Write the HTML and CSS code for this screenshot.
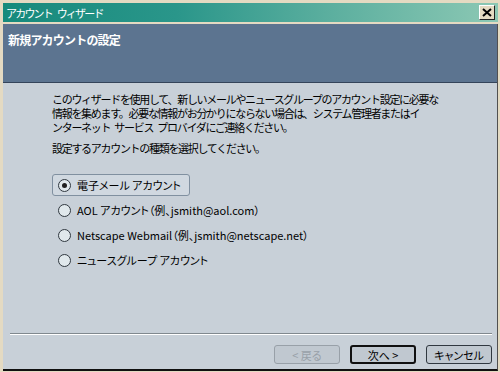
FILE: index.html
```html
<!DOCTYPE html>
<html lang="ja">
<head>
    <meta charset="UTF-8">
    <title>アカウント ウィザード</title>
    <link rel="stylesheet" href="styles.css">
</head>
<body>
    <div class="window">
        <div class="titlebar">
            <span class="title">アカウント ウィザード</span>
            <span class="close-btn">
                <svg width="10" height="9" viewBox="0 0 10 9">
                    <path d="M1 1 L9 8 M9 1 L1 8" stroke="#000" stroke-width="2"/>
                </svg>
            </span>
        </div>
        <div class="frame">
            <div class="header">
                <h1>新規アカウントの設定</h1>
            </div>
            <div class="content">
                <p class="intro">このウィザードを使用して、新しいメールやニュースグループのアカウント設定に必要な<br>情報を集めます。必要な情報がお分かりにならない場合は、システム管理者またはイ<br>ンターネット サービス プロバイダにご連絡ください。</p>
                <p class="prompt">設定するアカウントの種類を選択してください。</p>

                <div class="options">
                    <label class="option focused"><span class="radio checked"></span>電子メール アカウント</label>
                    <label class="option"><span class="radio"></span>AOL アカウント（例、jsmith@aol.com）</label>
                    <label class="option"><span class="radio"></span>Netscape Webmail（例、jsmith@netscape.net）</label>
                    <label class="option"><span class="radio"></span>ニュースグループ アカウント</label>
                </div>
            </div>
            <div class="footer">
                <div class="separator"></div>
                <div class="buttons">
                    <button class="btn" disabled>&lt; 戻る</button>
                    <button class="btn default">次へ &gt;</button>
                    <button class="btn">キャンセル</button>
                </div>
            </div>
        </div>
    </div>
</body>
</html>
```

FILE: styles.css
```css
/* Окно мастера */
body {
    margin: 0;
    font-family: "Noto Sans CJK JP", "DejaVu Sans", sans-serif;
    font-size: 11px;
    font-feature-settings: "palt";
}

.window {
    width: 500px;
    height: 372px;
    box-sizing: border-box;
    background: #e4dac2;
    padding: 3px 2px 1px 3px;
    display: flex;
    flex-direction: column;
}

/* Заголовок окна */
.titlebar {
    height: 19px;
    display: flex;
    align-items: center;
    justify-content: space-between;
    padding: 0 3px 0 3px;
    background: linear-gradient(to right, #168a7c 0%, #2a968a 35%, #5aae9e 65%, #8cc8b4 100%);
    color: white;
    margin-bottom: 2px;
}

.title {
    font-size: 11px;
    font-feature-settings: normal;
    letter-spacing: -1.8px;
    word-spacing: 4px;
}

.close-btn {
    width: 14px;
    height: 13px;
    display: flex;
    align-items: center;
    justify-content: center;
    background: #e4dac2;
    border-top: 1px solid #fff;
    border-left: 1px solid #fff;
    border-right: 1px solid #202020;
    border-bottom: 1px solid #202020;
}

.frame {
    flex: 1;
    display: flex;
    flex-direction: column;
    background: #c8d0d8;
    border-right: 1px solid #505050;
    border-bottom: 2px solid #101010;
}

/* Синяя шапка */
.header {
    height: 59px;
    background: #5c7490;
    border-bottom: 1px solid #34445a;
    padding: 7px 0 0 5px;
    box-sizing: border-box;
}

h1 {
    margin: 0;
    color: white;
    font-size: 12px;
    font-weight: bold;
    font-feature-settings: normal;
    letter-spacing: -0.8px;
}

/* Основной текст */
.content {
    flex: 1;
    padding: 9px 0 0 49px;
    color: #000;
}

.intro {
    margin: 0;
    line-height: 14px;
    font-feature-settings: normal;
    letter-spacing: -1.3px;
    word-spacing: 3px;
}

.prompt {
    margin: 7px 0 0 0;
    line-height: 14px;
    font-feature-settings: normal;
    letter-spacing: -1.3px;
}

.options {
    margin-top: 19px;
    display: flex;
    flex-direction: column;
    align-items: flex-start;
    gap: 3px;
}

.option {
    display: flex;
    align-items: center;
    gap: 6px;
    height: 20px;
    padding: 0 4px 0 5px;
    border: 1px solid transparent;
}

.option.focused {
    border: 1px solid #8090a0;
    border-radius: 3px;
    background: #d0d8e0;
    padding-right: 8px;
}

.radio {
    width: 11px;
    height: 11px;
    border-radius: 50%;
    border: 1px solid #303840;
    background: #e0e8ec;
    box-sizing: content-box;
    display: flex;
    align-items: center;
    justify-content: center;
}

.radio.checked::before {
    content: "";
    width: 5px;
    height: 5px;
    border-radius: 50%;
    background: #202020;
}

/* Низ окна с кнопками */
.footer {
    padding: 0 5px 5px 7px;
}

.separator {
    border-top: 1px solid #80888e;
    border-bottom: 1px solid #ffffff;
}

.buttons {
    display: flex;
    justify-content: flex-end;
    gap: 10px;
    margin-top: 10px;
}

.btn {
    width: 66px;
    height: 19px;
    padding: 0;
    font-family: inherit;
    font-size: 11px;
    font-feature-settings: "palt";
    color: #000;
    background: #c0c8d0;
    border: 1px solid #303840;
    border-radius: 3px;
}

.btn:disabled {
    color: #98a0a8;
    border-color: #98a0a8;
}

.btn.default {
    border: 2px solid #101010;
}
```
